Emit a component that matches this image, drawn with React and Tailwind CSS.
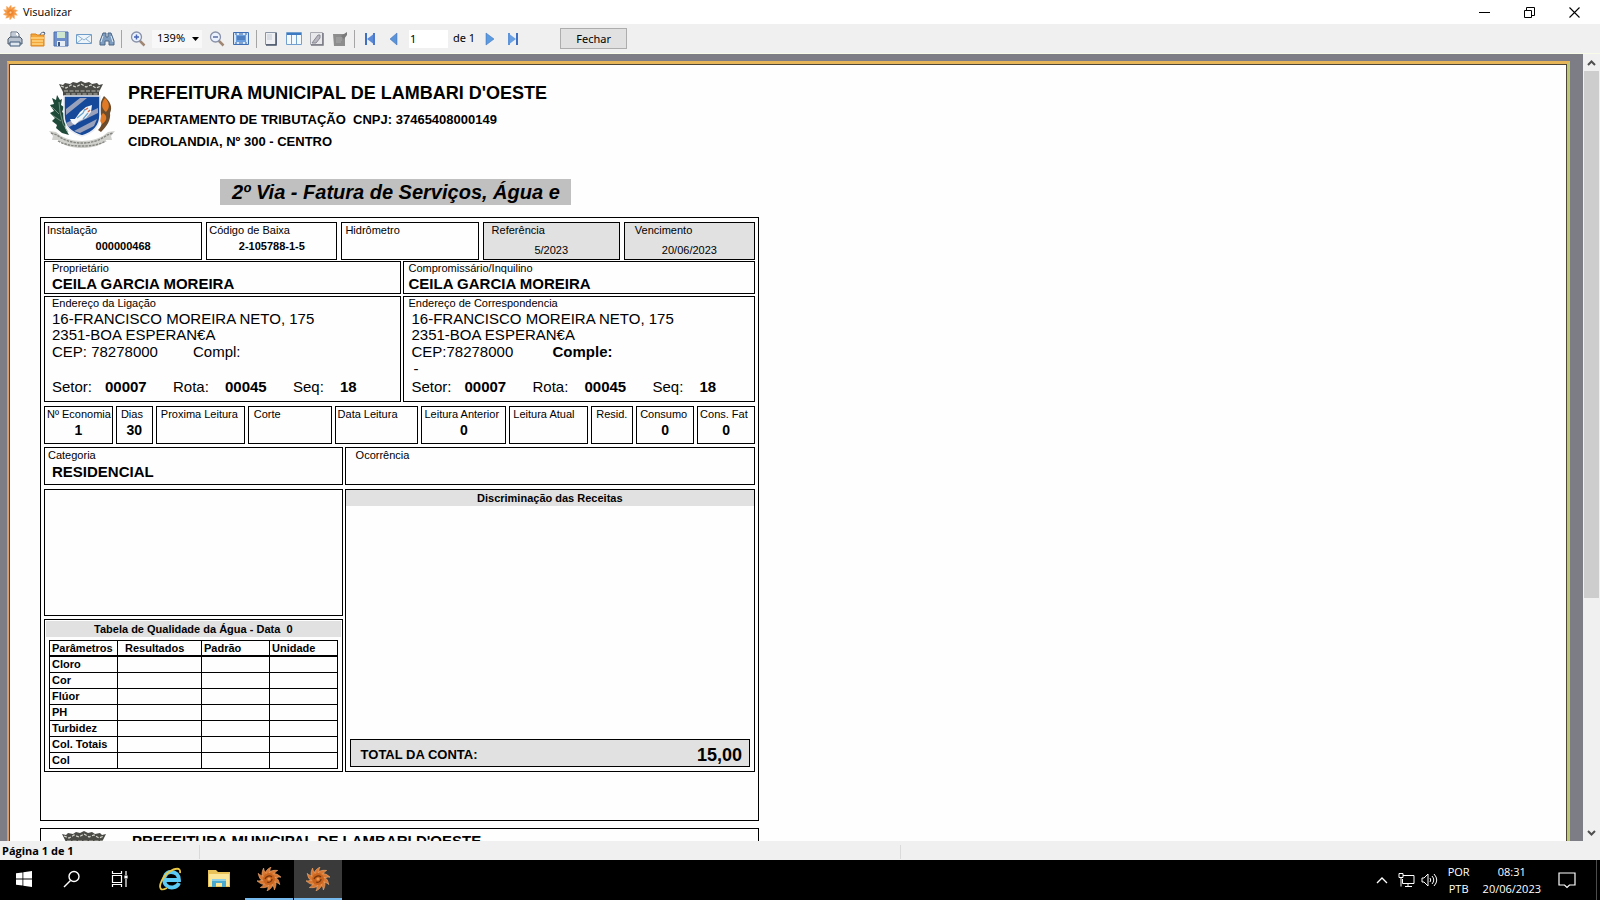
import { useState } from "react";

const arial = "font-['Liberation_Sans',Arial,sans-serif]";

const quality = ["Cloro", "Cor", "Flúor", "PH", "Turbidez", "Col. Totais", "Col"];

const readings = [
  { label: "Nº Economia", value: "1" },
  { label: "Dias", value: "30", pad: "pl-1" },
  { label: "Proxima Leitura", pad: "pl-1" },
  { label: "Corte", pad: "pl-[5px]" },
  { label: "Data Leitura", pad: "pl-0.5" },
  { label: "Leitura Anterior", value: "0" },
  { label: "Leitura Atual", pad: "pl-[3px]" },
  { label: "Resid.", pad: "pl-1" },
  { label: "Consumo", value: "0", pad: "pl-[3px]" },
  { label: "Cons. Fat", value: "0", pad: "pl-0.5" },
];

function Flower({ size, dark }) {
  const petals = [0, 36, 72, 108, 144, 180, 216, 252, 288, 324];
  return (
    <svg width={size} height={size} viewBox="0 0 24 24">
      {petals.map((a) => (
        <path
          key={a}
          d={dark ? "M9 8C8 5 9 3 14 0C12 3 14 5 13 8Z" : "M10 8C8 5 10 3 13 0C13 3 15 5 14 8Z"}
          fill={dark ? "#d87832" : "#f59a45"}
          stroke={dark ? "#f0aa70" : "#f8c08a"}
          strokeWidth="0.6"
          transform={`rotate(${a} 12 12)`}
        />
      ))}
      <circle cx="12" cy="12" r="6" fill={dark ? "#c9641e" : "#f39037"} />
      <path d="M8 12c1-3 5-4 7-2M10 15c3 1 5-1 5-3" stroke={dark ? "#71320c" : "#e37522"} strokeWidth="1.2" fill="none" />
      <circle cx="12" cy="12" r="1.6" fill={dark ? "#ef9a50" : "#ffd09c"} />
    </svg>
  );
}

function Crest() {
  return (
    <svg width="68" height="70" viewBox="0 0 68 70" className="block">
      {/* mural crown */}
      <path d="M11 3l4 1 2-2 5 1 3-2 4 1 4-2 4 2 4-1 3 2 5-1 2 2 4-1-4 8 0 4H15l0-4Z" fill="#4a4a46" />
      <path d="M13 5l5 2 5-3 5 2 5-3 5 3 5-2 5 3 5-2" stroke="#d5d5cd" strokeWidth="1.200" fill="none" strokeDasharray="3 1.500" />
      <path d="M16 10h36M18 13h32" stroke="#c8c8c0" strokeWidth="0.900" strokeDasharray="4 1.500" />
      {/* branches */}
      <path d="M9 14l3 5 2-1-1 6 3 2-2 5 3 2-1 6 2 3-1 5 4 7-7-2-6-5 1-3-5-4 3-3-5-5 4-2-4-6 4-1-2-6 4 2Z" fill="#1f4a3a" />
      <path d="M11 21l1 10 3 12 5 8M4 26l7 7M4 34l9 6" stroke="#86a090" strokeWidth="0.800" fill="none" />
      <path d="M56 15c6 5 9 11 6 17 1 7-3 13-9 19l-3-2c5-5 4-9 3-14-2-8-1-14 3-20Z" fill="#6d4c2c" />
      <path d="M57 17c5 5 5 10 1 14-5-4-5-9-1-14ZM55 32c5 3 4 8-1 11-3-3-2-8 1-11Z" fill="#e07a26" />
      {/* shield */}
      <path d="M16 15h36v19c0 12-8 18-18 21-10-3-18-9-18-21Z" fill="#17499a" stroke="#e8ebf2" strokeWidth="1.600" />
      <path d="M18 28L32 17h7L18 34ZM18 42L50 27v5L21 46ZM26 50l23-12-3 7-14 7Z" fill="#9aa1bb" />
      <path d="M24 42l-2-4 5 0 5-7 6-5 6-2-1 7-5 6-7 3-4 4Z" fill="#f3f7fa" />
      <path d="M29 37l6-5 2-4M35 38l5-6" stroke="#6ba3cc" strokeWidth="1.200" fill="none" />
      <path d="M37 29l3-2M40 31l2-2" stroke="#d66b4b" strokeWidth="1.400" />
      {/* ribbon */}
      <path d="M1 50l7 1c6 6 16 9 26 9s20-3 26-9l7-1-4 5 1 4-6 0c-6 6-14 8-24 8s-18-2-24-8l-6 0 1-4Z" fill="#d0d0cc" />
      <path d="M3 52l6 2c6 5 15 8 25 8s19-3 25-8l6-2M10 60c7 4 15 5 24 5s17-1 24-5" stroke="#858581" strokeWidth="1.400" fill="none" strokeDasharray="2.500 1" />
    </svg>
  );
}

function ToolIcon({ label, children, className = "w-[23px]" }) {
  return (
    <button type="button" aria-label={label} className={`flex h-6 shrink-0 items-center justify-center ${className}`}>
      <svg width="16" height="16" viewBox="0 0 16 16">
        {children}
      </svg>
    </button>
  );
}

function Separator({ className = "" }) {
  return <span className={`h-[18px] w-px shrink-0 bg-[#a5a5a5] ${className}`} />;
}

function Toolbar() {
  const [page, setPage] = useState("1");
  const [zoom, setZoom] = useState("139%");

  return (
    <div className="flex h-[30px] shrink-0 items-center border-b border-[#f8fbe8] bg-[#f0f0f0] pl-[3px] font-['Noto_Sans',sans-serif] text-[11px] text-black">
      <ToolIcon label="Imprimir">
        <path d="M4 7V1h6l2 2v4" fill="#fff" stroke="#5f6f83" />
        <path d="M1 8l2-2h10l2 2v5H1Z" fill="#b9c3cf" stroke="#4a5768" />
        <path d="M3 11h10v4H3Z" fill="#dfe7ef" stroke="#3f5878" />
        <path d="M5 3h4M5 5h5" stroke="#8296b0" />
      </ToolIcon>
      <ToolIcon label="Abrir">
        <path d="M1 3h5l1 1h7v11H1Z" fill="#f3a63a" stroke="#d98420" />
        <path d="M1 7h13M2 10h11M2 13h11" stroke="#ffd581" strokeWidth="1.3" />
        <path d="M10 4c1-3 3-3 5-2M13 1l2 1-1 2" stroke="#55657b" fill="none" />
      </ToolIcon>
      <ToolIcon label="Salvar">
        <path d="M1 1h14v14H1Z" fill="#6f8fca" stroke="#4d70ad" />
        <path d="M4 1h8v6H4Z" fill="#cfe6cf" />
        <path d="M4 10h8v5H4Z" fill="#e8eef6" />
        <path d="M5 11h2v4H5Z" fill="#3d557e" />
      </ToolIcon>
      <ToolIcon label="Enviar por e-mail">
        <path d="M0.500 3.500h15v9H.5Z" fill="#edf5fb" stroke="#6f9cc8" />
        <path d="M1 4l7 5 7-5M1 12l5-4M15 12l-5-4" stroke="#8fb2d2" fill="none" />
      </ToolIcon>
      <ToolIcon label="Localizar">
        <path d="M4 2h3v4h2V2h3l3 8v4h-5v-4H6v4H1v-4Z" fill="#7d9cbf" stroke="#4d6785" />
        <path d="M4 5l-2 6M12 5l2 6" stroke="#dceaf6" />
      </ToolIcon>
      <Separator className="ml-[3px]" />
      <ToolIcon label="Aumentar zoom" className="ml-[3px] w-[25px]">
        <path d="M9.500 9.500l5 5" stroke="#a08774" strokeWidth="2.500" />
        <circle cx="6.500" cy="6" r="5" fill="#eaf2ff" stroke="#8992a8" strokeWidth="1.300" />
        <path d="M4 6h5M6.500 3.500v5" stroke="#4764b5" strokeWidth="1.500" />
      </ToolIcon>
      <label className="ml-0.5 flex h-[18px] w-[50px] items-center bg-[#f8f8f8]">
        <select
          aria-label="Zoom"
          value={zoom}
          onChange={(e) => setZoom(e.target.value)}
          className="w-[34px] appearance-none pl-[5px] text-[11px] outline-none"
        >
          <option>139%</option>
          <option>100%</option>
        </select>
        <svg width="7" height="4" viewBox="0 0 7 4" className="ml-1.5">
          <path d="M0 0h7L3.500 4Z" fill="#000" />
        </svg>
      </label>
      <ToolIcon label="Diminuir zoom" className="ml-0.5 w-[25px]">
        <path d="M9.500 9.500l5 5" stroke="#a08774" strokeWidth="2.500" />
        <circle cx="6.500" cy="6" r="5" fill="#eaf2ff" stroke="#8992a8" strokeWidth="1.300" />
        <path d="M4 6h5" stroke="#5b6ba0" strokeWidth="1.500" />
      </ToolIcon>
      <ToolIcon label="Tela cheia">
        <path d="M.5 1.500h15v12H.5Z" fill="#d3e6fa" stroke="#3e6eb5" />
        <path d="M3 4h10v7H3Z" fill="#6b9fdf" />
        <path d="M2 3h2M6 3h4M12 3h2M2 12h2M6 12h4M12 12h2M4 6h8M4 8h8" stroke="#34609f" />
      </ToolIcon>
      <Separator className="ml-1" />
      <ToolIcon label="Estrutura" className="ml-[3px] w-[22px]">
        <path d="M2.500 1.500h11v12h-11Z" fill="#eef0f3" stroke="#8a95a5" />
        <path d="M13 2v12H3" stroke="#4a5668" strokeWidth="1.500" fill="none" />
        <path d="M4 4h5M4 6h5M4 8h5" stroke="#c5ccd6" />
      </ToolIcon>
      <ToolIcon label="Miniaturas">
        <path d="M.5 1.500h15v12H.5Z" fill="#f2f9ff" stroke="#74a0cf" />
        <path d="M1 2h14v2H1Z" fill="#3c7bc4" />
        <path d="M5.500 4v9M10.500 4v9" stroke="#74a0cf" />
      </ToolIcon>
      <ToolIcon label="Configurar página" className="w-[24px]">
        <path d="M1.500 1.500h12v12h-12Z" fill="#e9e9eb" stroke="#aaaab2" />
        <path d="M14 2v12H2" stroke="#777782" strokeWidth="1.500" fill="none" />
        <path d="M3 12L9 4l2 0v3L7 12Z" fill="#b9b8c0" stroke="#888894" />
      </ToolIcon>
      <ToolIcon label="Editar página" className="w-[22px]">
        <path d="M1 3h12v12H2Z" fill="#8d8d8d" />
        <path d="M9 5l6-4v3l-3 4Z" fill="#7a7a7a" />
        <path d="M4 7h6M4 9h6M4 11h5" stroke="#a9a9a9" />
      </ToolIcon>
      <Separator className="ml-[3px]" />
      <ToolIcon label="Primeira página" className="ml-[3px] w-[24px]">
        <path d="M3 2h2v12H3Z" fill="#3f6fc0" />
        <path d="M13 2v12L5 8Z" fill="#5b8bd8" />
        <path d="M11 2h2v12h-2l0-4Z" fill="#5078c8" />
      </ToolIcon>
      <ToolIcon label="Página anterior">
        <path d="M11 2v12L4 8Z" fill="#5b93d8" stroke="#3a6ab5" strokeWidth="0.5" />
      </ToolIcon>
      <input
        aria-label="Página"
        value={page}
        onChange={(e) => setPage(e.target.value)}
        className="ml-1 h-[18px] w-[39px] bg-white pl-px text-[11px] outline-none"
      />
      <span className="ml-[5px]">de 1</span>
      <ToolIcon label="Próxima página" className="ml-[3px] w-[23px]">
        <path d="M4 2v12l8-6Z" fill="#5b9be0" stroke="#3a6ab5" strokeWidth="0.5" />
      </ToolIcon>
      <ToolIcon label="Última página">
        <path d="M11 2h2v12h-2Z" fill="#3f6fc0" />
        <path d="M3 2v12l8-6Z" fill="#6aa0e2" />
        <path d="M3 2h2v12H3Z" fill="#5e94da" />
      </ToolIcon>
      <button type="button" className="ml-9 h-[21px] w-[67px] border border-[#adadad] bg-[#e1e1e1] text-[11px] leading-none">
        Fechar
      </button>
    </div>
  );
}

function Label({ children, className = "" }) {
  return <p className={`whitespace-nowrap text-[11px] leading-3 ${className}`}>{children}</p>;
}

function Box({ children, className = "" }) {
  return <div className={`min-w-0 border border-black ${className}`}>{children}</div>;
}

function Address({ title, cep, complement, note }) {
  return (
    <Box className="min-h-[106px] pb-1 pl-[7px]">
      {title}
      <p className="leading-4">16-FRANCISCO MOREIRA NETO, 175</p>
      <p className="leading-4">2351-BOA ESPERAN€A</p>
      <div className="grid grid-cols-[141px_1fr] leading-[18px]">
        <span>{cep}</span>
        {complement}
      </div>
      <p className="h-4 pl-0.5 leading-4">{note}</p>
      <div className="grid grid-cols-[53px_68px_52px_68px_47px_1fr] leading-5">
        <span>Setor:</span>
        <b>00007</b>
        <span>Rota:</span>
        <b>00045</b>
        <span>Seq:</span>
        <b>18</b>
      </div>
    </Box>
  );
}

function Invoice() {
  return (
    <section className="w-[719px] border border-black px-[3px] pb-12 pt-1 text-[15px]">
      <div className="grid min-h-[38px] grid-cols-[158fr_131fr_137fr_137fr_131fr] gap-1">
        <Box className="pt-px">
          <Label className="pl-0.5">Instalação</Label>
          <p className="mt-1 text-center text-[11px] font-bold leading-3">000000468</p>
        </Box>
        <Box className="pt-px">
          <Label className="pl-0.5">Código de Baixa</Label>
          <p className="mt-1 text-center text-[11px] font-bold leading-3">2-105788-1-5</p>
        </Box>
        <Box className="pt-px">
          <Label className="pl-[3px]">Hidrômetro</Label>
        </Box>
        <Box className="bg-[#e1e1e1] pt-px">
          <Label className="pl-2">Referência</Label>
          <p className="mt-2 text-center text-[11px] leading-3">5/2023</p>
        </Box>
        <Box className="bg-[#e1e1e1] pt-px">
          <Label className="pl-2.5">Vencimento</Label>
          <p className="mt-2 text-center text-[11px] leading-3">20/06/2023</p>
        </Box>
      </div>

      <div className="mt-px grid grid-cols-[358fr_352fr] gap-0.5">
        <Box className="min-h-[33px] pl-[7px]">
          <Label>Proprietário</Label>
          <p className="mt-0.5 font-bold leading-4">CEILA GARCIA MOREIRA</p>
        </Box>
        <Box className="min-h-[33px] pl-1">
          <Label>Compromissário/Inquilino</Label>
          <p className="mt-0.5 font-bold leading-4">CEILA GARCIA MOREIRA</p>
        </Box>
      </div>

      <div className="mt-0.5 grid grid-cols-[358fr_352fr] gap-0.5">
        <Address title={<Label className="mb-0.5">Endereço da Ligação</Label>} cep="CEP: 78278000" complement={<span>Compl:</span>} />
        <Address
          title={<Label className="-ml-[3px] mb-0.5">Endereço de Correspondencia</Label>}
          cep="CEP:78278000"
          complement={<b>Comple:</b>}
          note="-"
        />
      </div>

      <div className="mt-1 grid min-h-[38px] grid-cols-[69fr_37fr_89fr_84fr_84fr_85fr_79fr_42fr_58fr_58fr] gap-[3px]">
        {readings.map((r) => (
          <Box key={r.label} className="pt-px">
            <Label className={r.pad || "pl-0.5"}>{r.label}</Label>
            <p className="mt-0.5 text-center text-[14px] font-bold leading-4">{r.value}</p>
          </Box>
        ))}
      </div>

      <div className="mt-[3px] grid grid-cols-[299fr_411fr] gap-0.5">
        <Box className="min-h-[38px] pl-[3px] pt-px">
          <Label>Categoria</Label>
          <p className="mt-[3px] pl-1 font-bold leading-4">RESIDENCIAL</p>
        </Box>
        <Box className="pl-2.5 pt-px">
          <Label>Ocorrência</Label>
        </Box>
      </div>

      <div className="mt-1 grid grid-cols-[299fr_411fr] gap-0.5">
        <div className="flex flex-col gap-[3px]">
          <Box className="h-[127px]" />
          <Box className="p-px">
            <h3 className="bg-[#e1e1e1] text-center text-[11px] font-bold leading-4">Tabela de Qualidade da Água - Data&nbsp; 0</h3>
            <div className="px-[3px] pb-px pt-[3px]">
              <table className="w-full table-fixed border-collapse border border-black text-left text-[11px] leading-[15px]">
                <colgroup>
                  <col className="w-[68px]" />
                  <col className="w-[84px]" />
                  <col className="w-[68px]" />
                  <col />
                </colgroup>
                <thead className="leading-[14px]">
                  <tr className="border-b-2 border-black">
                    <th className="border-r border-black pl-0.5">Parâmetros</th>
                    <th className="border-r border-black pl-[7px]">Resultados</th>
                    <th className="border-r border-black pl-0.5">Padrão</th>
                    <th className="pl-0.5">Unidade</th>
                  </tr>
                </thead>
                <tbody>
                  {quality.map((name) => (
                    <tr key={name} className="border-t border-black">
                      <th className="border-r border-black pl-0.5">{name}</th>
                      <td className="border-r border-black" />
                      <td className="border-r border-black" />
                      <td />
                    </tr>
                  ))}
                </tbody>
              </table>
            </div>
          </Box>
        </div>
        <Box className="flex flex-col justify-between">
          <h3 className="bg-[#e1e1e1] text-center text-[11px] font-bold leading-4">Discriminação das Receitas</h3>
          <div className="mx-1 mb-1 flex h-7 items-center justify-between border border-black bg-[#e1e1e1] pl-2.5 pr-[7px] pt-1 font-bold">
            <span className="text-[13px]">TOTAL DA CONTA:</span>
            <span className="text-lg leading-6">15,00</span>
          </div>
        </Box>
      </div>
    </section>
  );
}

function Report() {
  return (
    <article className={`min-h-full bg-[#fefefe] pl-[30px] pt-4 text-black ${arial}`}>
      <header className="flex pl-2">
        <Crest />
        <div className="pl-3 font-bold">
          <h1 className="text-lg leading-6">PREFEITURA MUNICIPAL DE LAMBARI D'OESTE</h1>
          <p className="mt-1 text-[13px] leading-[22px]">DEPARTAMENTO DE TRIBUTAÇÃO&nbsp; CNPJ: 37465408000149</p>
          <p className="text-[13px] leading-[22px]">CIDROLANDIA, Nº 300 - CENTRO</p>
        </div>
      </header>
      <h2 className="ml-[180px] mt-[26px] w-[351px] whitespace-nowrap bg-[#c0c0c0] pl-3 text-xl font-bold italic leading-[26px]">
        2º Via - Fatura de Serviços, Água e
      </h2>
      <div className="mt-3">
        <Invoice />
      </div>
      <section className="mt-[7px] flex w-[719px] border border-black pl-2.5 pt-0.5">
        <Crest />
        <h2 className="pl-[13px] text-[15px] font-bold leading-5">PREFEITURA MUNICIPAL DE LAMBARI D'OESTE</h2>
      </section>
    </article>
  );
}

function TaskButton({ label, active, running, children }) {
  return (
    <button
      type="button"
      aria-label={label}
      className={`flex w-12 items-center justify-center border-b-2 ${active ? "bg-[#3a3a3a]" : ""} ${
        active || running ? "border-[#76b9ed]" : "border-transparent"
      }`}
    >
      {children}
    </button>
  );
}

function Taskbar() {
  return (
    <footer className="flex h-10 shrink-0 bg-black font-['Open_Sans',sans-serif] text-[11px] text-white">
      <TaskButton label="Iniciar">
        <svg width="16" height="16" viewBox="0 0 16 16" fill="#fff">
          <path d="M0 2.300L6.500 1.400V7.600H0ZM7.300 1.300L16 0V7.600H7.300ZM0 8.400h6.500v6.200L0 13.700ZM7.300 8.400H16V16l-8.700-1.300Z" />
        </svg>
      </TaskButton>
      <TaskButton label="Pesquisar">
        <svg width="18" height="18" viewBox="0 0 18 18" fill="none" stroke="#fff" strokeWidth="1.400">
          <circle cx="11" cy="6.500" r="5" />
          <path d="M7.500 10.500L1 17" />
        </svg>
      </TaskButton>
      <TaskButton label="Visão de tarefas">
        <svg width="18" height="16" viewBox="0 0 18 16" fill="none" stroke="#fff" strokeWidth="1.200">
          <path d="M1.500 4.500h9v7h-9ZM1.500 0v2.500h9V0M1.500 16v-2.500h9V16M15 0v4M15 8v8" />
          <path d="M14 5h2v2h-2Z" fill="#fff" />
        </svg>
      </TaskButton>
      <span className="w-[3px]" />
      <TaskButton label="Internet Explorer">
        <svg width="24" height="24" viewBox="0 0 24 24" fill="none">
          <path d="M20 16c-2 5-9 6-13 2-4-5-1-13 5-13 5 0 8 3 8 8H7" stroke="#5ccbf5" strokeWidth="3.800" />
          <path d="M21 6c1-6-5-5-11-1C4 9-1 19 2 22c1 1 4 0 6-1" stroke="#e9c747" strokeWidth="1.800" />
        </svg>
      </TaskButton>
      <TaskButton label="Explorador de Arquivos">
        <svg width="22" height="20" viewBox="0 0 22 20">
          <path d="M0 1h8l2 2h12v15H0Z" fill="#e9c25a" />
          <path d="M1 5h20v12H1Z" fill="#fbe69a" />
          <path d="M4 10h14v8h-4v-4H8v4H4Z" fill="#4aa9cf" />
          <path d="M4 10h14v2H4Z" fill="#8ed1e6" />
        </svg>
      </TaskButton>
      <span className="w-0.5" />
      <TaskButton label="Tributação" running>
        <Flower size={24} dark />
      </TaskButton>
      <span className="w-px" />
      <TaskButton label="Visualizar" active>
        <Flower size={24} dark />
      </TaskButton>

      <div className="ml-auto flex items-center">
        <svg width="12" height="8" viewBox="0 0 12 8" fill="none" stroke="#fff" strokeWidth="1.300">
          <path d="M1 7l5-5 5 5" />
        </svg>
        <svg width="17" height="14" viewBox="0 0 17 14" fill="none" stroke="#fff" className="ml-2.5">
          <path d="M5 2.500h11v8H4.500V6M1 .5h4v4H1ZM3 5v8.500M7 13.500h7M10 11v2" />
        </svg>
        <svg width="17" height="14" viewBox="0 0 17 14" fill="none" stroke="#fff" className="ml-1.5">
          <path d="M1 5h2l4-4v12L3 9H1ZM9 5q1.500 2 0 4M11 3q3.500 4 0 8M13 1q5.500 6 0 12" />
        </svg>
        <div className="ml-2.5 text-center leading-[17px]">
          <p>POR</p>
          <p>PTB</p>
        </div>
        <time className="ml-[13px] text-center leading-[17px]">
          <span className="block">08:31</span>
          <span className="block">20/06/2023</span>
        </time>
        <button type="button" aria-label="Notificações" className="ml-[17px]">
          <svg width="18" height="17" viewBox="0 0 18 17" fill="none" stroke="#fff" strokeWidth="1.200">
            <path d="M1 1h16v12h-5.500L9 15.500 6.500 13H1Z" />
          </svg>
        </button>
        <span className="ml-5 mr-[3px] h-10 w-px bg-[#4b4b4b]" />
      </div>
    </footer>
  );
}

export default function App() {
  return (
    <div className="flex h-screen flex-col overflow-hidden bg-white">
      <div className="flex h-6 shrink-0 items-center pl-[3px] font-['Open_Sans',sans-serif] text-xs text-black">
        <Flower size={15} />
        <h1 className="ml-[5px] text-[11px]">Visualizar</h1>
        <div className="ml-auto flex items-center">
          <button type="button" aria-label="Minimizar" className="flex h-5 w-[45px] items-center justify-center">
            <svg width="11" height="11" stroke="#000">
              <path d="M0 5.500h11" />
            </svg>
          </button>
          <button type="button" aria-label="Restaurar" className="flex h-5 w-[45px] items-center justify-center">
            <svg width="11" height="11" fill="none" stroke="#000">
              <path d="M.5 3.500h7v7h-7ZM2.500 3V.5h8v8H8" />
            </svg>
          </button>
          <button type="button" aria-label="Fechar janela" className="mr-[3px] flex h-5 w-[45px] items-center justify-center">
            <svg width="11" height="11" fill="none" stroke="#000" strokeWidth="1.100">
              <path d="M.5.5l10 10M10.500.5l-10 10" />
            </svg>
          </button>
        </div>
      </div>

      <Toolbar />

      <main className="flex min-h-0 flex-1">
        <div className="min-w-0 flex-1 overflow-hidden bg-[#7d7d86] pl-[7px] pr-[13px] pt-[7px]">
          <div className="h-full border-l-2 border-r-[3px] border-t-[3px] border-l-[#d99a6c] border-r-[#bcc873] border-t-[#e6b558]">
            <div className="h-full overflow-hidden border-x border-t border-[#4d4636]">
              <Report />
            </div>
          </div>
        </div>
        <div className="flex w-[17px] flex-col items-center bg-[#f0f0f0]">
          <button type="button" aria-label="Rolar para cima" className="flex h-[17px] w-full items-center justify-center">
            <svg width="9" height="6" fill="none" stroke="#505050" strokeWidth="2">
              <path d="M1 5l3.500-3.500L8 5" />
            </svg>
          </button>
          <div className="w-[15px] flex-[527] bg-[#cdcdcd]" />
          <div className="flex-[226]" />
          <button type="button" aria-label="Rolar para baixo" className="flex h-[17px] w-full items-center justify-center">
            <svg width="9" height="6" fill="none" stroke="#505050" strokeWidth="2">
              <path d="M1 1l3.500 3.500L8 1" />
            </svg>
          </button>
        </div>
      </main>

      <div className="flex h-[19px] shrink-0 items-center bg-[#f0f0f0] pt-0.5 font-['Open_Sans',sans-serif] text-[11px] font-bold text-black">
        <span className="w-[199px] pl-0.5">Página 1 de 1</span>
        <span className="h-3.5 w-[702px] border-x border-[#dadada]" />
      </div>

      <Taskbar />
    </div>
  );
}
